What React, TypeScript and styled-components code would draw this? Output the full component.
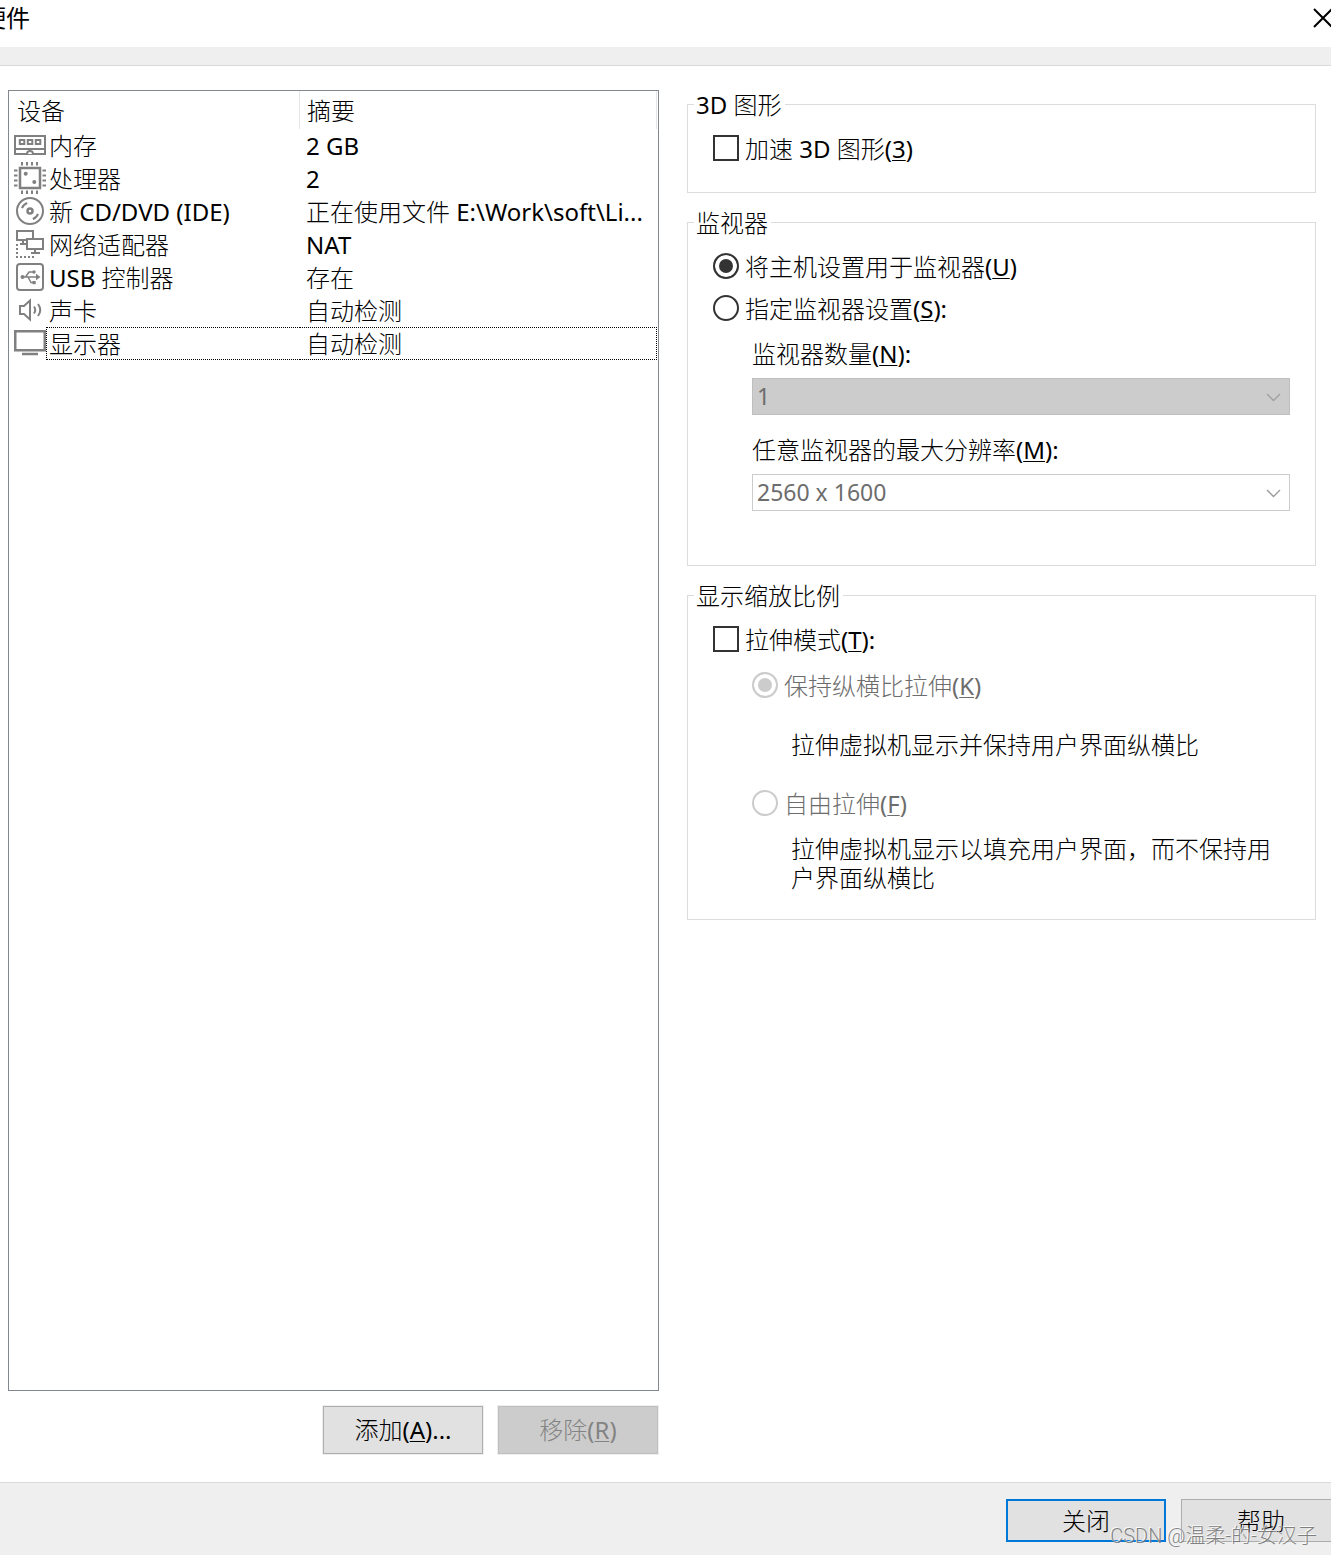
import React from "react";
import styled, { createGlobalStyle, css } from "styled-components";

const GlobalStyle = createGlobalStyle`
  *, *::before, *::after { box-sizing: border-box; }
  body {
    margin: 0;
    background: #fff;
    color: #000;
    font-family: "Noto Sans", "Noto Sans CJK SC", sans-serif;
    font-size: 24px;
    font-weight: 300;
    line-height: 32px;
  }
  button, select, input { font: inherit; color: inherit; margin: 0; }
`;

const Window = styled.div`
  position: relative;
  display: flex;
  flex-direction: column;
  min-height: 100vh;
  overflow: hidden;
`;

const TitleBar = styled.header`
  display: flex;
  align-items: center;
  justify-content: space-between;
  height: 47px;
  margin: 0 -2px 0 -18px;
  padding-bottom: 11px;
`;

const Title = styled.h1`
  margin: 0;
  font-size: 24px;
  font-weight: 400;
`;

const CloseIconButton = styled.button`
  display: flex;
  padding: 0;
  border: 0;
  background: none;
`;

const Band = styled.div`
  height: 19px;
  background: #efefef;
  border-bottom: 1px solid #d9d9d9;
`;

const Content = styled.main`
  flex: 1;
  display: grid;
  grid-template-columns: 651fr 629fr;
  gap: 28px;
  padding: 24px 15px 28px 8px;
`;

const DevicePane = styled.section`
  display: flex;
  flex-direction: column;
  gap: 15px;
  min-width: 0;
`;

const DeviceList = styled.div`
  flex: 1;
  padding-right: 1px;
  border: 1px solid #828790;
`;

const DeviceTable = styled.table`
  width: 100%;
  table-layout: fixed;
  border-collapse: separate;
  border-spacing: 0;
`;

const HeadCell = styled.th<{ $first?: boolean }>`
  width: ${(p) => (p.$first ? "291px" : "auto")};
  height: 38px;
  padding: ${(p) => (p.$first ? "2px 8px 0" : "2px 7px 0")};
  border-right: 1px solid #e5e5e5;
  font-weight: inherit;
  text-align: left;
`;

const focusEdge = css<{ $focused?: boolean }>`
  border: 1px dotted ${(p) => (p.$focused ? "#000" : "transparent")};
`;

const Cell = styled.td`
  height: 33px;
  padding: 0;
`;

const Device = styled.div`
  display: flex;
  align-items: flex-start;
  padding-left: 5px;
`;

const DeviceName = styled.span<{ $focused?: boolean }>`
  ${focusEdge}
  border-right: 0;
  flex: 1;
  height: 33px;
  padding-left: 2px;
`;

const Summary = styled.div<{ $focused?: boolean }>`
  ${focusEdge}
  border-left: 0;
  height: 33px;
  padding: 0 2px 0 6px;
  overflow: hidden;
  text-overflow: ellipsis;
  white-space: nowrap;
`;

const ListActions = styled.div`
  display: flex;
  justify-content: flex-end;
  gap: 15px;
  padding-right: 1px;
`;

const PushButton = styled.button<{ $kind?: "list" | "default" | "footer" }>`
  width: 160px;
  height: ${(p) => (p.$kind === "list" ? "48px" : "43px")};
  padding: 0;
  border: ${(p) => (p.$kind === "default" ? "2px solid #0078d7" : "1px solid #adadad")};
  background: #e1e1e1;
  box-shadow: ${(p) => (p.$kind === "list" ? "0 0 0 1px #efefef" : "none")};
  &:disabled {
    color: #838383;
    background: #ccc;
    border-color: #bfbfbf;
  }
`;

const Settings = styled.form`
  display: flex;
  flex-direction: column;
  gap: 15px;
  min-width: 0;
`;

const Group = styled.fieldset<{ $bottom: number }>`
  min-width: 0;
  margin: 0;
  padding: 0 6px ${(p) => p.$bottom}px;
  border: 1px solid #dcdcdc;
`;

const Legend = styled.legend`
  padding: 0 3px 0 2px;
  line-height: 29px;
`;

const GroupBody = styled.div`
  padding: 13px 19px 0;
`;

const Option = styled.div<{ $space?: number }>`
  display: flex;
  align-items: center;
  gap: 6px;
  height: 32px;
  margin-top: ${(p) => p.$space ?? 0}px;
`;

const tickStyle = css`
  appearance: none;
  flex: none;
  width: 26px;
  height: 26px;
  border: 2px solid #333;
  background: #fff;
  &:disabled { border-color: #ccc; }
`;

const Checkbox = styled.input.attrs({ type: "checkbox" })`
  ${tickStyle}
  &:checked { background: #333; box-shadow: inset 0 0 0 4px #fff; }
`;

const Radio = styled.input.attrs({ type: "radio" })`
  ${tickStyle}
  border-radius: 50%;
  &:checked { background: #333; box-shadow: inset 0 0 0 4px #fff; }
  &:checked:disabled { background: #ccc; }
`;

const OptionLabel = styled.label<{ $muted?: boolean }>`
  padding-top: 2px;
  color: ${(p) => (p.$muted ? "#6d6d6d" : "inherit")};
`;

const Nested = styled.div<{ $space: number }>`
  margin-top: ${(p) => p.$space}px;
  padding-left: 39px;
`;

const FieldLabel = styled.label`
  display: block;
`;

const SelectBox = styled.div<{ $after?: number }>`
  position: relative;
  margin: 8px 0 ${(p) => p.$after ?? 0}px;
`;

const Select = styled.select<{ $filled?: boolean }>`
  appearance: none;
  display: block;
  width: 100%;
  height: 37px;
  padding: 0 32px 1px 4px;
  border: 1px solid ${(p) => (p.$filled ? "#bfbfbf" : "#ccc")};
  border-radius: 0;
  background: ${(p) => (p.$filled ? "#ccc" : "#fff")};
  font-size: 23px;
  font-weight: 400;
  &:disabled { color: #6d6d6d; opacity: 1; }
`;

const Chevron = styled.svg`
  position: absolute;
  top: 15px;
  right: 9px;
  pointer-events: none;
`;

const Description = styled.p<{ $top: number; $after?: number }>`
  margin: ${(p) => p.$top}px 0 ${(p) => p.$after ?? 0}px;
  padding-left: 39px;
  line-height: 29px;
`;

const Footer = styled.footer`
  display: flex;
  justify-content: flex-end;
  gap: 15px;
  margin-right: -10px;
  padding: 16px 0 13px;
  border-top: 1px solid #d9d9d9;
  background: #efefef;
`;

const Watermark = styled.span`
  position: absolute;
  right: 14px;
  bottom: 5px;
  color: rgba(110, 110, 110, 0.85);
  font-family: Roboto, "Noto Sans CJK SC", sans-serif;
  font-size: 20px;
  line-height: 28px;
  text-shadow: -1px -1px 0 rgba(255, 255, 255, 0.8);
  pointer-events: none;
`;

const Latin = styled.span`
  font-weight: 400;
`;

const AccessKey = styled.u`
  text-decoration-thickness: 1px;
  text-underline-offset: 2px;
  text-decoration-skip-ink: none;
`;

/* Chinese runs use the light face, Latin runs the regular one. */
function Mixed({ text }: { text: string }) {
  return (
    <>
      {text.split(/([\x21-\x7e]+(?: [\x21-\x7e]+)*)/).map((run, i) =>
        i % 2 ? <Latin key={i}>{run}</Latin> : run
      )}
    </>
  );
}

function Keyed({ text, k, tail = "" }: { text: string; k: string; tail?: string }) {
  return (
    <>
      <Mixed text={text} />
      <Latin>
        (<AccessKey>{k}</AccessKey>){tail}
      </Latin>
    </>
  );
}

const Glyph = styled.svg.attrs({ width: 32, height: 32, viewBox: "0 0 32 32", fill: "none", stroke: "#808080", "aria-hidden": true })`
  flex: none;
`;

const MemoryIcon = () => (
  <Glyph>
    <path d="M1 7h30v18H1z M1 20h30" strokeWidth="2" />
    <path d="M5.8 11h4.5v4h-4.5z M13.8 11h4.5v4h-4.5z M21.8 11h4.5v4h-4.5z" strokeWidth="2" />
    <path d="M13 25a3 3 0 0 1 6 0" strokeWidth="2" fill="#fff" />
  </Glyph>
);

const CpuIcon = () => (
  <Glyph>
    <rect x="6" y="6" width="20" height="20" strokeWidth="2.5" />
    <path
      d="M8 0v3.5M13 0v3.5M18 0v3.5M23 0v3.5M8 28.5V32M13 28.5V32M18 28.5V32M23 28.5V32M0 8.5h3.5M0 13.5h3.5M0 18.5h3.5M0 23.5h3.5M28.5 8.5H32M28.5 13.5H32M28.5 18.5H32M28.5 23.5H32"
      strokeWidth="2"
    />
    <circle cx="11.7" cy="11.8" r="2" fill="#808080" stroke="none" />
    <circle cx="20.3" cy="20" r="2" fill="#808080" stroke="none" />
  </Glyph>
);

const DiscIcon = () => (
  <Glyph>
    <circle cx="16" cy="16" r="13" strokeWidth="2" />
    <circle cx="16" cy="16" r="2.5" strokeWidth="2.5" />
    <path d="M8 13.2A8.5 8.5 0 0 1 13.2 8M24 18.8A8.5 8.5 0 0 1 18.8 24" strokeWidth="2" />
  </Glyph>
);

const NetworkIcon = () => (
  <Glyph>
    <path d="M3 3h16v9H3z" strokeWidth="2" />
    <path d="M9 12v4M6 16h6" strokeWidth="2" />
    <path d="M13 11h16v10H13z" strokeWidth="2" fill="#fff" />
    <path d="M21 21v4M17 25h9" strokeWidth="2" />
    <path d="M3 16v12M2 29h18" strokeWidth="2" strokeDasharray="2 2" />
  </Glyph>
);

const UsbIcon = () => (
  <Glyph>
    <rect x="3" y="3" width="26" height="26" rx="3" strokeWidth="2" />
    <path d="M8 16h15M11.5 16l3.5-5h5M14 16l3 5.5h3" strokeWidth="1.5" />
    <path d="M22 12.8l4.5 3.2-4.5 3.2z" fill="#808080" stroke="none" />
    <circle cx="8.5" cy="16" r="2" fill="#808080" stroke="none" />
    <circle cx="20" cy="11" r="1.7" fill="#808080" stroke="none" />
    <path d="M18.5 20h3.2v3.2h-3.2z" fill="#808080" stroke="none" />
  </Glyph>
);

const SoundIcon = () => (
  <Glyph>
    <path d="M6 12h4l6-5.5v19L10 20H6z" strokeWidth="2" />
    <path d="M20 12.5q2.5 3.5 0 7M24 10q4.5 6 0 12" strokeWidth="2" />
  </Glyph>
);

const DisplayIcon = () => (
  <Glyph>
    <path d="M1.25 4.25h29.5v19h-29.5z" strokeWidth="2.5" />
    <path d="M8 27h16" strokeWidth="2.5" />
  </Glyph>
);

const devices = [
  { icon: MemoryIcon, name: "内存", summary: "2 GB" },
  { icon: CpuIcon, name: "处理器", summary: "2" },
  { icon: DiscIcon, name: "新 CD/DVD (IDE)", summary: "正在使用文件 E:\\Work\\soft\\Li..." },
  { icon: NetworkIcon, name: "网络适配器", summary: "NAT" },
  { icon: UsbIcon, name: "USB 控制器", summary: "存在" },
  { icon: SoundIcon, name: "声卡", summary: "自动检测" },
  { icon: DisplayIcon, name: "显示器", summary: "自动检测", focused: true },
];

const ChevronDown = ({ color }: { color: string }) => (
  <Chevron width="15" height="9" viewBox="0 0 15 9" fill="none" stroke={color} aria-hidden>
    <path d="M1 1l6.5 6.5L14 1" strokeWidth="1.3" />
  </Chevron>
);

export default function App() {
  return (
    <>
      <GlobalStyle />
      <Window>
        <TitleBar>
          <Title>硬件</Title>
          <CloseIconButton type="button" aria-label="关闭">
            <svg width="20" height="20" viewBox="0 0 20 20" stroke="#000" strokeWidth="2" aria-hidden>
              <path d="M1 1l18 18M19 1L1 19" />
            </svg>
          </CloseIconButton>
        </TitleBar>
        <Band />
        <Content>
          <DevicePane>
            <DeviceList>
              <DeviceTable>
                <thead>
                  <tr>
                    <HeadCell $first>设备</HeadCell>
                    <HeadCell>摘要</HeadCell>
                  </tr>
                </thead>
                <tbody>
                  {devices.map(({ icon: Icon, name, summary, focused }) => (
                    <tr key={name}>
                      <Cell>
                        <Device>
                          <Icon />
                          <DeviceName $focused={focused}>
                            <Mixed text={name} />
                          </DeviceName>
                        </Device>
                      </Cell>
                      <Cell>
                        <Summary $focused={focused}>
                          <Mixed text={summary} />
                        </Summary>
                      </Cell>
                    </tr>
                  ))}
                </tbody>
              </DeviceTable>
            </DeviceList>
            <ListActions>
              <PushButton type="button" $kind="list">
                <Keyed text="添加" k="A" tail="..." />
              </PushButton>
              <PushButton type="button" $kind="list" disabled>
                <Keyed text="移除" k="R" />
              </PushButton>
            </ListActions>
          </DevicePane>

          <Settings>
            <Group $bottom={28}>
              <Legend>
                <Mixed text="3D 图形" />
              </Legend>
              <GroupBody>
                <Option>
                  <Checkbox id="accelerate" />
                  <OptionLabel htmlFor="accelerate">
                    <Keyed text="加速 3D 图形" k="3" />
                  </OptionLabel>
                </Option>
              </GroupBody>
            </Group>

            <Group $bottom={54}>
              <Legend>监视器</Legend>
              <GroupBody>
                <Option>
                  <Radio id="host" name="monitor" defaultChecked />
                  <OptionLabel htmlFor="host">
                    <Keyed text="将主机设置用于监视器" k="U" />
                  </OptionLabel>
                </Option>
                <Option $space={10}>
                  <Radio id="specify" name="monitor" />
                  <OptionLabel htmlFor="specify">
                    <Keyed text="指定监视器设置" k="S" tail=":" />
                  </OptionLabel>
                </Option>
                <Nested $space={14}>
                  <FieldLabel htmlFor="count">
                    <Keyed text="监视器数量" k="N" tail=":" />
                  </FieldLabel>
                  <SelectBox $after={19}>
                    <Select id="count" $filled disabled>
                      <option>1</option>
                    </Select>
                    <ChevronDown color="#a0a0a0" />
                  </SelectBox>
                  <FieldLabel htmlFor="resolution">
                    <Keyed text="任意监视器的最大分辨率" k="M" tail=":" />
                  </FieldLabel>
                  <SelectBox>
                    <Select id="resolution" disabled>
                      <option>2560 x 1600</option>
                    </Select>
                    <ChevronDown color="#999" />
                  </SelectBox>
                </Nested>
              </GroupBody>
            </Group>

            <Group $bottom={27}>
              <Legend>显示缩放比例</Legend>
              <GroupBody>
                <Option>
                  <Checkbox id="stretch" />
                  <OptionLabel htmlFor="stretch">
                    <Keyed text="拉伸模式" k="T" tail=":" />
                  </OptionLabel>
                </Option>
                <Nested $space={14}>
                  <Option>
                    <Radio id="keep" name="stretchMode" defaultChecked disabled />
                    <OptionLabel htmlFor="keep" $muted>
                      <Keyed text="保持纵横比拉伸" k="K" />
                    </OptionLabel>
                  </Option>
                  <Description $top={29} $after={28}>
                    拉伸虚拟机显示并保持用户界面纵横比
                  </Description>
                  <Option>
                    <Radio id="free" name="stretchMode" disabled />
                    <OptionLabel htmlFor="free" $muted>
                      <Keyed text="自由拉伸" k="F" />
                    </OptionLabel>
                  </Option>
                  <Description $top={15}>拉伸虚拟机显示以填充用户界面，而不保持用户界面纵横比</Description>
                </Nested>
              </GroupBody>
            </Group>
          </Settings>
        </Content>
        <Footer>
          <PushButton type="button" $kind="default">
            关闭
          </PushButton>
          <PushButton type="button" $kind="footer">
            帮助
          </PushButton>
        </Footer>
        <Watermark>CSDN @温柔-的-女汉子</Watermark>
      </Window>
    </>
  );
}
